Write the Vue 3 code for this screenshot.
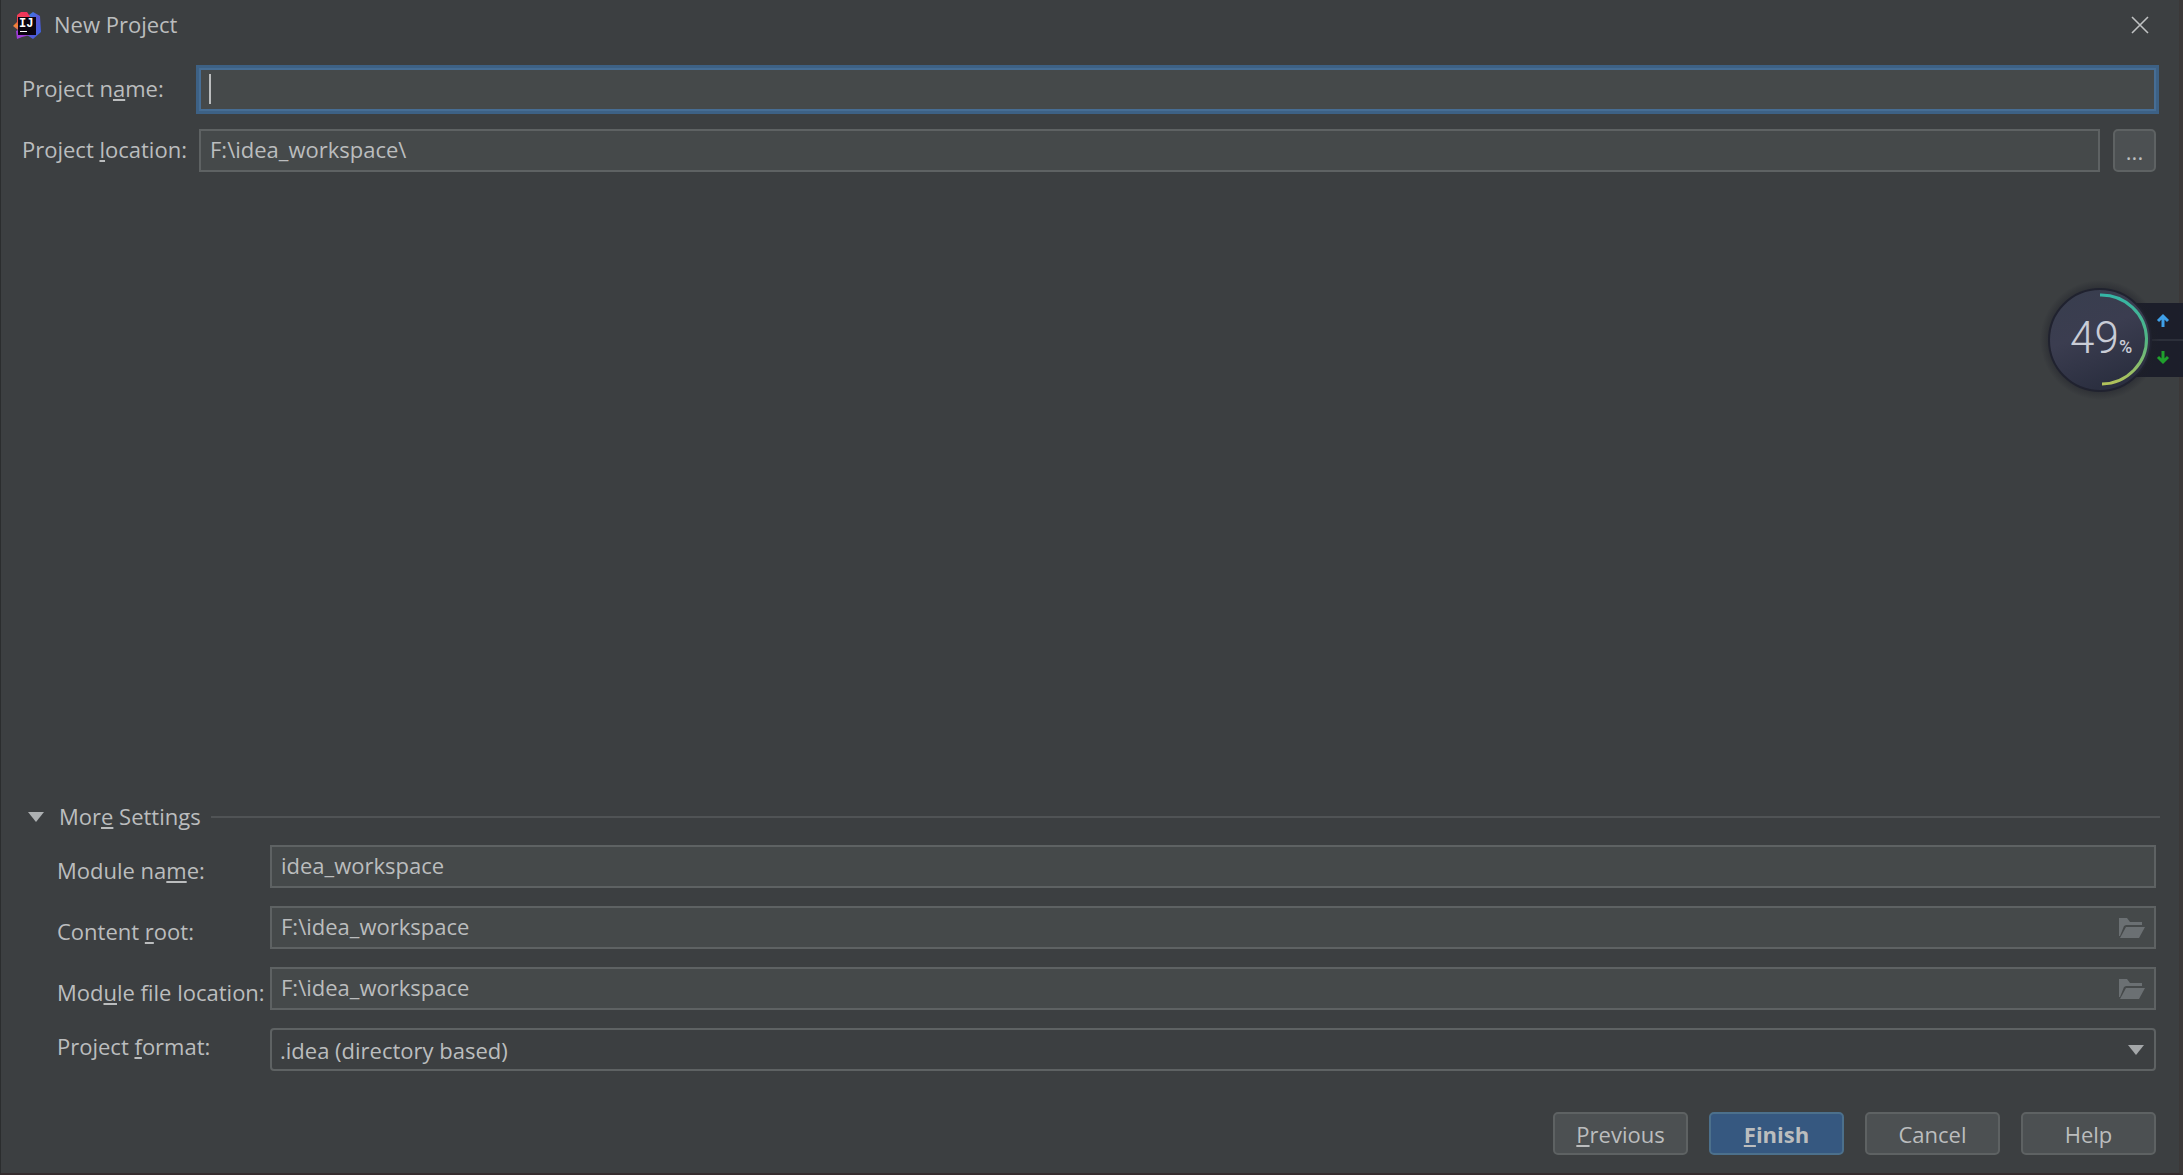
<script setup>
import { ref } from 'vue'

const projectName = ref('')
const projectLocation = ref('F:\\idea_workspace\\')
const projectFormat = ref('directory')

const moduleFields = ref([
  { id: 'module-name', label: ['Module na', 'm', 'e:'], value: 'idea_workspace', browse: false },
  { id: 'content-root', label: ['Content ', 'r', 'oot:'], value: 'F:\\idea_workspace', browse: true },
  { id: 'module-file', label: ['Mod', 'u', 'le file location:'], value: 'F:\\idea_workspace', browse: true },
])
</script>

<template>
  <main class="dialog">
    <header class="titlebar">
      <svg class="logo" viewBox="0 0 28 28" aria-hidden="true">
        <defs>
          <linearGradient id="logo-blue" x1="0" y1="0" x2="1" y2="1">
            <stop offset="0" stop-color="#2f86e8" />
            <stop offset="0.5" stop-color="#5a55d6" />
            <stop offset="1" stop-color="#3565e0" />
          </linearGradient>
          <linearGradient id="logo-warm" x1="0.6" y1="0" x2="0.3" y2="1">
            <stop offset="0" stop-color="#f0325c" />
            <stop offset="0.5" stop-color="#ee4a50" />
            <stop offset="0.75" stop-color="#f08a32" />
            <stop offset="1" stop-color="#c84a9a" />
          </linearGradient>
        </defs>
        <path d="M16 4 20 1 27 5 28 21 20 28 14 24Z" fill="url(#logo-blue)" />
        <path d="M4 4 8 1 14 1 18 7 8 21 5 19 0 15 4 11Z" fill="url(#logo-warm)" />
        <path d="M3 20 9 17 17 24 9 26 4 28Z" fill="#a03cd8" />
        <rect x="5" y="6" width="18" height="18" fill="#0b0410" />
        <text x="6" y="16" class="logo-text">IJ</text>
        <rect x="7" y="20" width="7" height="1" fill="#fff" />
      </svg>
      <h1>New Project</h1>
      <button class="close" type="button" aria-label="Close">
        <svg viewBox="0 0 18 18" width="18" height="18"><path d="M1 1 17 17M17 1 1 17" stroke="#c0c2c3" stroke-width="1.6" fill="none" /></svg>
      </button>
    </header>

    <form class="body" @submit.prevent>
      <section class="project">
        <label for="project-name">Project n<u>a</u>me:</label>
        <div class="field focused">
          <input id="project-name" v-model="projectName" type="text" />
          <span class="caret"></span>
        </div>
        <label for="project-location">Project <u>l</u>ocation:</label>
        <div class="location">
          <input id="project-location" v-model="projectLocation" type="text" />
          <button class="button more" type="button">...</button>
        </div>
      </section>

      <section class="settings">
        <button class="toggle" type="button" aria-expanded="true">
          <svg viewBox="0 0 16 10" width="16" height="10"><path d="M0 0H16L8 10Z" fill="#adb0b2" /></svg>
          <span>Mor<u>e</u> Settings</span>
        </button>
        <div class="grid">
          <template v-for="item in moduleFields" :key="item.id">
            <label :for="item.id">{{ item.label[0] }}<u>{{ item.label[1] }}</u>{{ item.label[2] }}</label>
            <div class="field">
              <input :id="item.id" v-model="item.value" type="text" />
              <button v-if="item.browse" class="browse" type="button" aria-label="Browse">
                <svg viewBox="0 0 26 20" width="26" height="20">
                  <path d="M0 18V0H8L11 4H23V7H7L5 8 1 18Z" fill="#6b7073" />
                  <path d="M7 9H26L20 20H1Z" fill="#6b7073" />
                </svg>
              </button>
            </div>
          </template>
          <label class="format-label" for="project-format">Project <u>f</u>ormat:</label>
          <div class="field">
            <select id="project-format" v-model="projectFormat">
              <option value="directory">.idea (directory based)</option>
              <option value="file">.ipr (file based)</option>
            </select>
            <svg class="arrow" viewBox="0 0 16 10" width="16" height="10"><path d="M0 0H16L8 10Z" fill="#a4a7a9" /></svg>
          </div>
        </div>
      </section>

      <footer class="actions">
        <button class="button" type="button"><span><u>P</u>revious</span></button>
        <button class="button primary" type="submit"><span><u>F</u>inish</span></button>
        <button class="button" type="button">Cancel</button>
        <button class="button" type="button">Help</button>
      </footer>
    </form>

    <aside class="monitor">
      <svg viewBox="0 0 143 120" width="143" height="120">
        <defs>
          <linearGradient id="disc" x1="0" y1="0" x2="0.4" y2="1">
            <stop offset="0" stop-color="#383e4e" />
            <stop offset="0.5" stop-color="#3b3d50" />
            <stop offset="1" stop-color="#2b2f40" />
          </linearGradient>
          <linearGradient id="arc" x1="0" y1="0" x2="0" y2="1">
            <stop offset="0" stop-color="#35b5a6" />
            <stop offset="0.5" stop-color="#52b684" />
            <stop offset="1" stop-color="#b2c25a" />
          </linearGradient>
          <radialGradient id="halo">
            <stop offset="0.84" stop-color="#1e2028" stop-opacity="0.5" />
            <stop offset="1" stop-color="#1e2028" stop-opacity="0" />
          </radialGradient>
        </defs>
        <rect x="90" y="23" width="53" height="74" fill="#1c1e2a" />
        <path d="M110 60H143" stroke="#2c2f3a" stroke-width="2" />
        <circle cx="60" cy="60" r="60" fill="url(#halo)" />
        <circle cx="60" cy="60" r="51" fill="url(#disc)" stroke="#20222f" stroke-width="2" />
        <path d="M60 15A45 44 0 0 1 62 104" fill="none" stroke="url(#arc)" stroke-width="3" />
        <text x="30" y="73" class="percent">49</text>
        <text x="79" y="73" class="unit">%</text>
        <path d="M123 47V36M118 41 123 36 128 41" fill="none" stroke="#3fa0e8" stroke-width="3" />
        <path d="M123 71V82M118 77 123 82 128 77" fill="none" stroke="#1fa02c" stroke-width="3" />
      </svg>
    </aside>
  </main>
</template>

<style>
body {
  background: #3c3f41;
}
</style>

<style scoped>
* {
  box-sizing: border-box;
}
.dialog {
  position: relative;
  display: flex;
  flex-direction: column;
  min-height: 100vh;
  border-left: 1px solid #2b2d2e;
  border-right: 4px solid #3b3838;
  border-bottom: 2px solid #352c2e;
  background: #3c3f41;
  color: #bbbdbe;
  font-family: "Open Sans", "Noto Sans", sans-serif;
  font-size: 22px;
  line-height: 30px;
}
input,
select,
button {
  margin: 0;
  color: inherit;
  font: inherit;
}
u {
  text-decoration-thickness: 2px;
  text-underline-offset: 2px;
  text-decoration-skip-ink: none;
}
.titlebar {
  display: flex;
  align-items: center;
  gap: 13px;
  height: 49px;
  padding: 0 30px 0 12px;
}
.logo {
  width: 28px;
  height: 28px;
}
.logo-text {
  fill: #fff;
  font: bold 12px "Liberation Mono", monospace;
}
h1 {
  flex: 1;
  margin: 0;
  padding-bottom: 2px;
  font-size: 22px;
  font-weight: 400;
}
.close {
  display: flex;
  padding: 0;
  border: 0;
  background: none;
}
.body {
  display: flex;
  flex: 1;
  flex-direction: column;
  padding: 19px 23px 18px 21px;
}
.project,
.grid {
  display: grid;
  align-items: center;
  row-gap: 18px;
}
.project {
  grid-template-columns: 177px 1fr;
}
label {
  white-space: nowrap;
}
.project label {
  padding-bottom: 4px;
}
.field {
  position: relative;
  display: flex;
}
input,
select {
  width: 100%;
  min-width: 0;
  height: 43px;
  padding: 0 9px 4px;
  border: 2px solid #5e6263;
  border-radius: 0;
  outline: none;
  background: #45494a;
}
.focused input {
  border-color: #466d94;
  box-shadow: 0 0 0 3px #3d6185;
}
.caret {
  position: absolute;
  top: 6px;
  left: 10px;
  width: 2px;
  height: 30px;
  background: #bbbdbe;
}
.location {
  display: flex;
  gap: 13px;
}
.button {
  display: flex;
  align-items: center;
  justify-content: center;
  width: 135px;
  height: 43px;
  padding: 0;
  border: 2px solid #5e6263;
  border-radius: 5px;
  background: #4c5052;
}
.more {
  flex: none;
  width: 43px;
}
.settings {
  margin-top: auto;
}
.toggle {
  display: flex;
  align-items: center;
  width: calc(100% + 4px);
  padding: 0 0 0 6px;
  border: 0;
  background: none;
}
.toggle span {
  margin-left: 15px;
  padding-bottom: 2px;
}
.toggle::after {
  flex: 1;
  height: 2px;
  margin-left: 10px;
  background: #505355;
  content: "";
}
.grid {
  grid-template-columns: 213px 1fr;
  margin-top: 12px;
  padding-left: 35px;
}
.grid label {
  padding-top: 7px;
}
.grid .format-label {
  padding: 0 0 8px;
}
select {
  padding: 0 8px;
  border-radius: 4px;
  background: #3c3f41;
  appearance: none;
}
.browse {
  position: absolute;
  top: 12px;
  right: 11px;
  display: flex;
  padding: 0;
  border: 0;
  background: none;
}
.arrow {
  position: absolute;
  top: 17px;
  right: 12px;
  pointer-events: none;
}
.actions {
  display: flex;
  justify-content: flex-end;
  gap: 21px;
  margin-top: 41px;
}
.primary {
  border-color: #4c708c;
  background: #365880;
  font-weight: 700;
}
.monitor {
  position: absolute;
  top: 280px;
  right: -4px;
  display: flex;
}
.percent {
  fill: #c9ccd6;
  font: 300 44px Roboto, sans-serif;
}
.unit {
  fill: #c9ccd6;
  font: 500 18px Roboto, sans-serif;
}
</style>
